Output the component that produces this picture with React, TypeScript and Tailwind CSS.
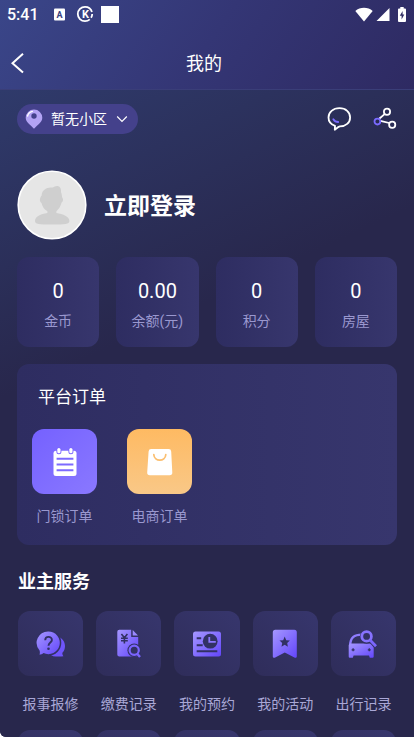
import type { ReactNode } from "react";

const stats = [
  { label: "金币", value: "0" },
  { label: "余额(元)", value: "0.00" },
  { label: "积分", value: "0" },
  { label: "房屋", value: "0" },
];

const DARK = "#323164";
const FILL = "url(#violet)";

function Icon({ children }: { children: ReactNode }) {
  return (
    <svg viewBox="0 0 32 32" className="w-8 h-8" fill="none" aria-hidden="true">
      {children}
    </svg>
  );
}

function RepairIcon() {
  return (
    <Icon>
      <path
        d="M22 8.4 C27 9.6 30 13.4 30 18 C30 21 29 23.2 27.4 24.8 C27.2 26.2 27.6 27 28.4 28.3 C25.6 28.6 22 28.8 18.2 28.2 L14 26 Z"
        fill="#6f55fb"
      />
      <circle cx="13.3" cy="14.8" r="13" fill={DARK} />
      <path
        d="M13.3 3.4 A11.4 11.4 0 1 1 8.5 25.1 C7.3 26.2 6 26.6 4.4 26.6 C5 25.4 5 24 4.6 22.4 A11.4 11.4 0 0 1 13.3 3.4 Z"
        fill={FILL}
      />
      <path
        d="M10.2 12.2 C10.2 7.8 16.9 7.8 16.9 12 C16.9 14.6 13.5 14.6 13.5 17.8"
        stroke={DARK}
        strokeWidth="1.9"
      />
      <circle cx="13.5" cy="20.8" r="1.3" fill={DARK} />
    </Icon>
  );
}

function PaymentIcon() {
  return (
    <Icon>
      <path
        d="M6.3 1.8 H18.2 V9 H25.2 V26.5 A2 2 0 0 1 23.2 28.5 H6.3 A2 2 0 0 1 4.3 26.5 V3.8 A2 2 0 0 1 6.3 1.8 Z"
        fill={FILL}
      />
      <path d="M19.7 2 L25 7.6 H19.7 Z" fill="#9a89ff" />
      <path
        d="M8.4 6 L11.4 9.8 L14.4 6 M11.4 9.8 V15.4 M8 10.2 H14.8 M8 12.8 H14.8"
        stroke={DARK}
        strokeWidth="1.6"
      />
      <circle cx="21.2" cy="22.2" r="6.8" fill={DARK} />
      <path d="M24 24 L28.5 29.5" stroke={DARK} strokeWidth="4" />
      <circle cx="21.2" cy="22.2" r="4.6" stroke="#7a64fd" strokeWidth="2.2" />
      <path d="M24.4 26 L27 29" stroke="#7a64fd" strokeWidth="2.4" />
    </Icon>
  );
}

function BookingIcon() {
  return (
    <Icon>
      <rect x="2" y="3.5" width="28" height="25" rx="2.5" fill={FILL} />
      <circle cx="19.2" cy="13.2" r="7.4" fill={DARK} />
      <path d="M18.3 9 V13.8 H24.8" stroke="#8b77fe" strokeWidth="1.8" />
      <path
        d="M5.7 10.2 H10.2 M5.7 17.2 H11.7 M5.7 23.3 H26.3"
        stroke={DARK}
        strokeWidth="2"
      />
    </Icon>
  );
}

function ActivityIcon() {
  return (
    <Icon>
      <path
        d="M6.3 1.8 H25.3 A2.5 2.5 0 0 1 27.8 4.3 V28.2 C27.8 29.6 26.6 30.2 25.4 29.5 L15.8 24.4 L6.2 29.5 C5 30.2 3.8 29.6 3.8 28.2 V4.3 A2.5 2.5 0 0 1 6.3 1.8 Z"
        fill={FILL}
      />
      <path
        d="M15.7 8.6 L17.2 12.2 L20.9 12.6 L18.2 15 L18.9 18.7 L15.7 16.8 L12.5 18.7 L13.2 15 L10.5 12.6 L14.2 12.2 Z"
        fill={DARK}
      />
    </Icon>
  );
}

function TripIcon() {
  return (
    <Icon>
      <path
        d="M3.2 17.5 C3.2 9.5 7 6.6 15 6.6"
        stroke="#8f7cfe"
        strokeWidth="2.4"
      />
      <path
        d="M3 15.6 H25 A1.7 1.7 0 0 1 26.7 17.3 V28.6 A1.2 1.2 0 0 1 25.5 29.8 H22.8 L22 27.4 H6.6 L5.8 29.8 H3 A1.2 1.2 0 0 1 1.7 28.6 V17 Z"
        fill={FILL}
      />
      <path
        d="M4.6 21.8 H7.6 M6.1 20.3 V23.3 M20.8 21.8 H23.8 M22.3 20.3 V23.3"
        stroke={DARK}
        strokeWidth="1.3"
      />
      <circle cx="19.6" cy="8.8" r="6.9" fill={DARK} />
      <path d="M23 12 L29.2 18.6" stroke={DARK} strokeWidth="4.6" />
      <circle cx="19.6" cy="8.4" r="4.8" stroke="#8672fe" strokeWidth="2.8" />
      <path d="M23 12 L29 18.2" stroke="#7b66fd" strokeWidth="2.8" />
    </Icon>
  );
}

function LockOrderIcon() {
  return (
    <Icon>
      <rect x="4.5" y="4.7" width="23" height="25.3" rx="2.5" fill="#fff" />
      <rect x="7.4" y="1.2" width="5" height="7" rx="2.5" fill="#7a66ff" />
      <rect x="19.4" y="1.2" width="5" height="7" rx="2.5" fill="#7a66ff" />
      <rect x="8.3" y="1.9" width="3.2" height="5.4" rx="1.6" fill="#fff" />
      <rect x="20.3" y="1.9" width="3.2" height="5.4" rx="1.6" fill="#fff" />
      <path
        d="M7.6 12.8 H24.4 M7.6 18.5 H24.4 M7.6 24.3 H24.4"
        stroke="#7d6aff"
        strokeWidth="1.9"
      />
    </Icon>
  );
}

function ShopOrderIcon() {
  return (
    <Icon>
      <path
        d="M7.2 3 H24.6 A2.6 2.6 0 0 1 27.2 5.4 L28.3 26.6 A2.6 2.6 0 0 1 25.7 29.3 H5.8 A2.6 2.6 0 0 1 3.2 26.6 L4.6 5.4 A2.6 2.6 0 0 1 7.2 3 Z"
        fill="#fff"
      />
      <path
        d="M9.8 8.6 C10.4 16 21.2 16 21.8 8.6"
        stroke="#fbbf70"
        strokeWidth="1.7"
        strokeLinecap="round"
      />
    </Icon>
  );
}

const services = [
  { label: "报事报修", icon: <RepairIcon /> },
  { label: "缴费记录", icon: <PaymentIcon /> },
  { label: "我的预约", icon: <BookingIcon /> },
  { label: "我的活动", icon: <ActivityIcon /> },
  { label: "出行记录", icon: <TripIcon /> },
];

function StatusBar() {
  return (
    <div className="h-7 pl-[7px] pr-2 flex items-center justify-between">
      <div className="flex items-center">
        <span className="w-[47px] pt-px text-base leading-7 font-medium">5:41</span>
        <svg viewBox="0 0 12 13" className="w-3 h-[13px]" aria-hidden="true">
          <rect x="0" y="0.5" width="11" height="12" rx="1" fill="#fff" />
          <text
            x="5.4"
            y="9.5"
            textAnchor="middle"
            fontSize="9"
            fontWeight="700"
            fill="#39427f"
          >
            A
          </text>
        </svg>
        <svg viewBox="0 0 18 18" className="ml-[10px] w-[18px] h-[18px]" aria-hidden="true">
          <circle
            cx="9"
            cy="9"
            r="7.2"
            fill="none"
            stroke="#fff"
            strokeWidth="1.8"
            strokeDasharray="4 2 37 2.2"
          />
          <text
            x="9.4"
            y="13"
            textAnchor="middle"
            fontSize="11"
            fontWeight="700"
            fill="#fff"
          >
            K
          </text>
        </svg>
        <span className="ml-[7px] w-[18px] h-[17px] bg-white" />
      </div>
      <div className="flex items-center">
        <svg viewBox="0 0 18 15" className="w-[18px] h-[15px]" fill="#fff" aria-hidden="true">
          <path d="M9 14.5 L0.3 4 C5 -0.2 13 -0.2 17.7 4 Z" />
        </svg>
        <svg viewBox="0 0 14 14" className="ml-[3px] w-[14px] h-[14px]" fill="#fff" aria-hidden="true">
          <path d="M0.5 14 L13.5 1 V14 Z" />
        </svg>
        <svg viewBox="0 0 8 15" className="ml-2 w-2 h-[15px]" aria-hidden="true">
          <path d="M2.3 0 H5.7 V1.5 H7 A1 1 0 0 1 8 2.5 V14 A1 1 0 0 1 7 15 H1 A1 1 0 0 1 0 14 V2.5 A1 1 0 0 1 1 1.5 H2.3 Z" fill="#fff" />
          <path d="M4.6 4 L1.8 8.8 H3.6 V12.4 L6.3 7.4 H4.6 Z" fill="#2f2c63" />
        </svg>
      </div>
    </div>
  );
}

function Stat({ label, value }: { label: string; value: string }) {
  return (
    <a
      href="#"
      className="h-[90px] rounded-xl bg-linear-to-r from-[#2e2d61] to-[#37366d] flex flex-col items-center pt-[22px]"
    >
      <span className="text-xl leading-6">{value}</span>
      <span className="mt-2 text-sm text-[#9a98cf]">{label}</span>
    </a>
  );
}

export default function App() {
  return (
    <div className="h-screen flex flex-col overflow-hidden rounded-bl-md bg-[#28274c] text-white font-[Roboto,'Noto_Sans_CJK_SC',sans-serif]">
      <svg className="absolute w-0 h-0" aria-hidden="true">
        <linearGradient id="violet" x1="0" y1="0" x2="1" y2="1">
          <stop offset="0" stopColor="#a597ff" />
          <stop offset="1" stopColor="#6346fb" />
        </linearGradient>
      </svg>

      <header className="shrink-0 bg-[linear-gradient(125deg,#3a4689_0%,#343675_50%,#2e2a62_100%)] border-b border-[#3a3e78]">
        <StatusBar />
        <div className="h-[61px] pt-[10px] pl-[10px] pr-4 grid grid-cols-[1fr_auto_1fr] items-center">
          <button type="button" aria-label="返回" className="w-4 h-6">
            <svg viewBox="0 0 16 24" className="w-4 h-6" fill="none">
              <path d="M13 1.8 L2.5 11.2 L13 20.6" stroke="#fff" strokeWidth="2" />
            </svg>
          </button>
          <h1 className="text-lg">我的</h1>
        </div>
      </header>

      <main className="flex-1 overflow-y-auto [scrollbar-width:none] bg-[linear-gradient(155deg,#2f3a6b_0px,#28274c_280px)]">
        <div className="px-[17px] pt-[14px]">
          <div className="flex items-center justify-between">
            <button
              type="button"
              className="h-[30px] rounded-full bg-[#44418b] pl-2 pr-[10px] flex items-center text-sm"
            >
              <svg viewBox="0 0 18 20" className="w-[18px] h-5" aria-hidden="true">
                <path
                  d="M9 0.5 A8.3 8.3 0 0 1 17.3 8.8 C17.3 13 13 15.5 9 19.8 C5 15.5 0.7 13 0.7 8.8 A8.3 8.3 0 0 1 9 0.5 Z"
                  fill="#b3a3f4"
                />
                <path d="M2.6 7 C3.2 4.4 4.8 3 7.4 2.4" stroke="#fff" strokeWidth="1.3" fill="none" strokeLinecap="round" />
                <circle cx="9" cy="7" r="2.7" fill="#44418b" />
              </svg>
              <span className="ml-2">暂无小区</span>
              <svg viewBox="0 0 12 8" className="ml-[9px] w-3 h-2" fill="none" aria-hidden="true">
                <path d="M1.2 1.5 L6 6.3 L10.8 1.5" stroke="#fff" strokeWidth="1.2" />
              </svg>
            </button>
            <div className="flex gap-[22px]">
              <button type="button" aria-label="消息">
                <svg viewBox="0 0 24 24" className="w-6 h-6" fill="none">
                  <path
                    d="M12.5 1.2 C18.8 1.2 23.1 5.2 23.1 10.4 C23.1 15.6 18.8 19.4 12.8 19.4 C11 19.9 9.6 21.4 7.8 22.8 L8 18.9 C3.6 17.4 1.5 14.4 1.5 10.6 C1.5 5.2 6 1.2 12.5 1.2 Z"
                    stroke="#fff"
                    strokeWidth="1.8"
                    strokeLinejoin="round"
                  />
                  <path d="M6.3 12.2 C7.4 14 9 15 11.2 15" stroke="#7b6bff" strokeWidth="1.8" strokeLinecap="round" />
                </svg>
              </button>
              <button type="button" aria-label="分享">
                <svg viewBox="0 0 24 24" className="w-6 h-6" fill="none">
                  <path d="M6.2 11.8 L12.2 6.6 M7.4 13.8 L16.2 16" stroke="#fff" strokeWidth="1.8" />
                  <circle cx="14" cy="4.7" r="3.1" stroke="#fff" strokeWidth="1.8" />
                  <circle cx="19.2" cy="17.8" r="3.1" stroke="#fff" strokeWidth="1.8" />
                  <circle cx="4.4" cy="14.6" r="2.9" fill="#292a52" stroke="#7b6bff" strokeWidth="1.8" />
                </svg>
              </button>
            </div>
          </div>

          <a href="#" className="mt-9 flex items-center">
            <svg viewBox="0 0 70 70" className="w-[70px] h-[70px]" aria-hidden="true">
              <circle cx="35" cy="35" r="33.8" fill="#e6e6e6" stroke="#fff" strokeWidth="1.6" />
              <path
                d="M23.5 32 C22 29 23.8 26.6 24.6 25.4 C25 20.6 29 17.4 34.4 17.6 C36.4 17.6 38.4 15.6 40.8 16 C43.4 16.6 44.4 19.4 44 22 C45 24.6 44.8 26 45.2 27.4 C46.8 29.4 45.8 31.6 44.6 32.6 C43.6 36.8 41.6 39.4 39.4 41.2 V43 C46 44.2 52.4 46.4 52.4 51 C52.4 54.2 48 54.6 35 54.6 C22 54.6 18 54.2 18 51 C18 46.4 23.6 44.2 30.4 43 V41.2 C26.6 38.8 25.2 36 24.6 33.2 Z"
                fill="#cfcfcf"
              />
            </svg>
            <span className="ml-[17px] pt-1 text-[23px] font-bold">立即登录</span>
          </a>

          <div className="mt-[17px] grid grid-cols-4 gap-[17px]">
            {stats.map((s) => (
              <Stat key={s.label} label={s.label} value={s.value} />
            ))}
          </div>

          <section className="mt-[17px] rounded-xl bg-linear-to-r from-[#2e2d61] to-[#37366d] px-[15px] pt-[21px] pb-[19px]">
            <h2 className="pl-[6px] text-[17px] leading-6">平台订单</h2>
            <div className="mt-5 flex gap-[30px]">
              <a href="#" className="flex flex-col items-center">
                <span className="w-[65px] h-[65px] rounded-xl bg-linear-to-br from-[#7561ff] to-[#8a78ff] flex items-center justify-center">
                  <LockOrderIcon />
                </span>
                <span className="mt-3 text-sm text-[#9a98cf]">门锁订单</span>
              </a>
              <a href="#" className="flex flex-col items-center">
                <span className="w-[65px] h-[65px] rounded-xl bg-linear-to-b from-[#feba62] to-[#f9c887] flex items-center justify-center">
                  <ShopOrderIcon />
                </span>
                <span className="mt-3 text-sm text-[#9a98cf]">电商订单</span>
              </a>
            </div>
          </section>

          <section className="mt-[25px] px-px">
            <h2 className="text-lg leading-6 font-bold">业主服务</h2>
            <div className="mt-[17px] grid grid-cols-5 gap-x-[13px] gap-y-4">
              {services.map((s) => (
                <a key={s.label} href="#" className="flex flex-col items-center">
                  <span className="w-full h-[65px] rounded-xl bg-linear-to-tr from-[#2f2d5a] to-[#37366d] flex items-center justify-center">
                    {s.icon}
                  </span>
                  <span className="mt-[18px] text-sm text-[#a9a7d6] whitespace-nowrap">
                    {s.label}
                  </span>
                </a>
              ))}
              {/* second row, its entries are still loading */}
              {services.map((s) => (
                <span
                  key={s.label}
                  className="h-[65px] rounded-xl bg-linear-to-tr from-[#2f2d5a] to-[#37366d]"
                />
              ))}
            </div>
          </section>
        </div>
      </main>
    </div>
  );
}
